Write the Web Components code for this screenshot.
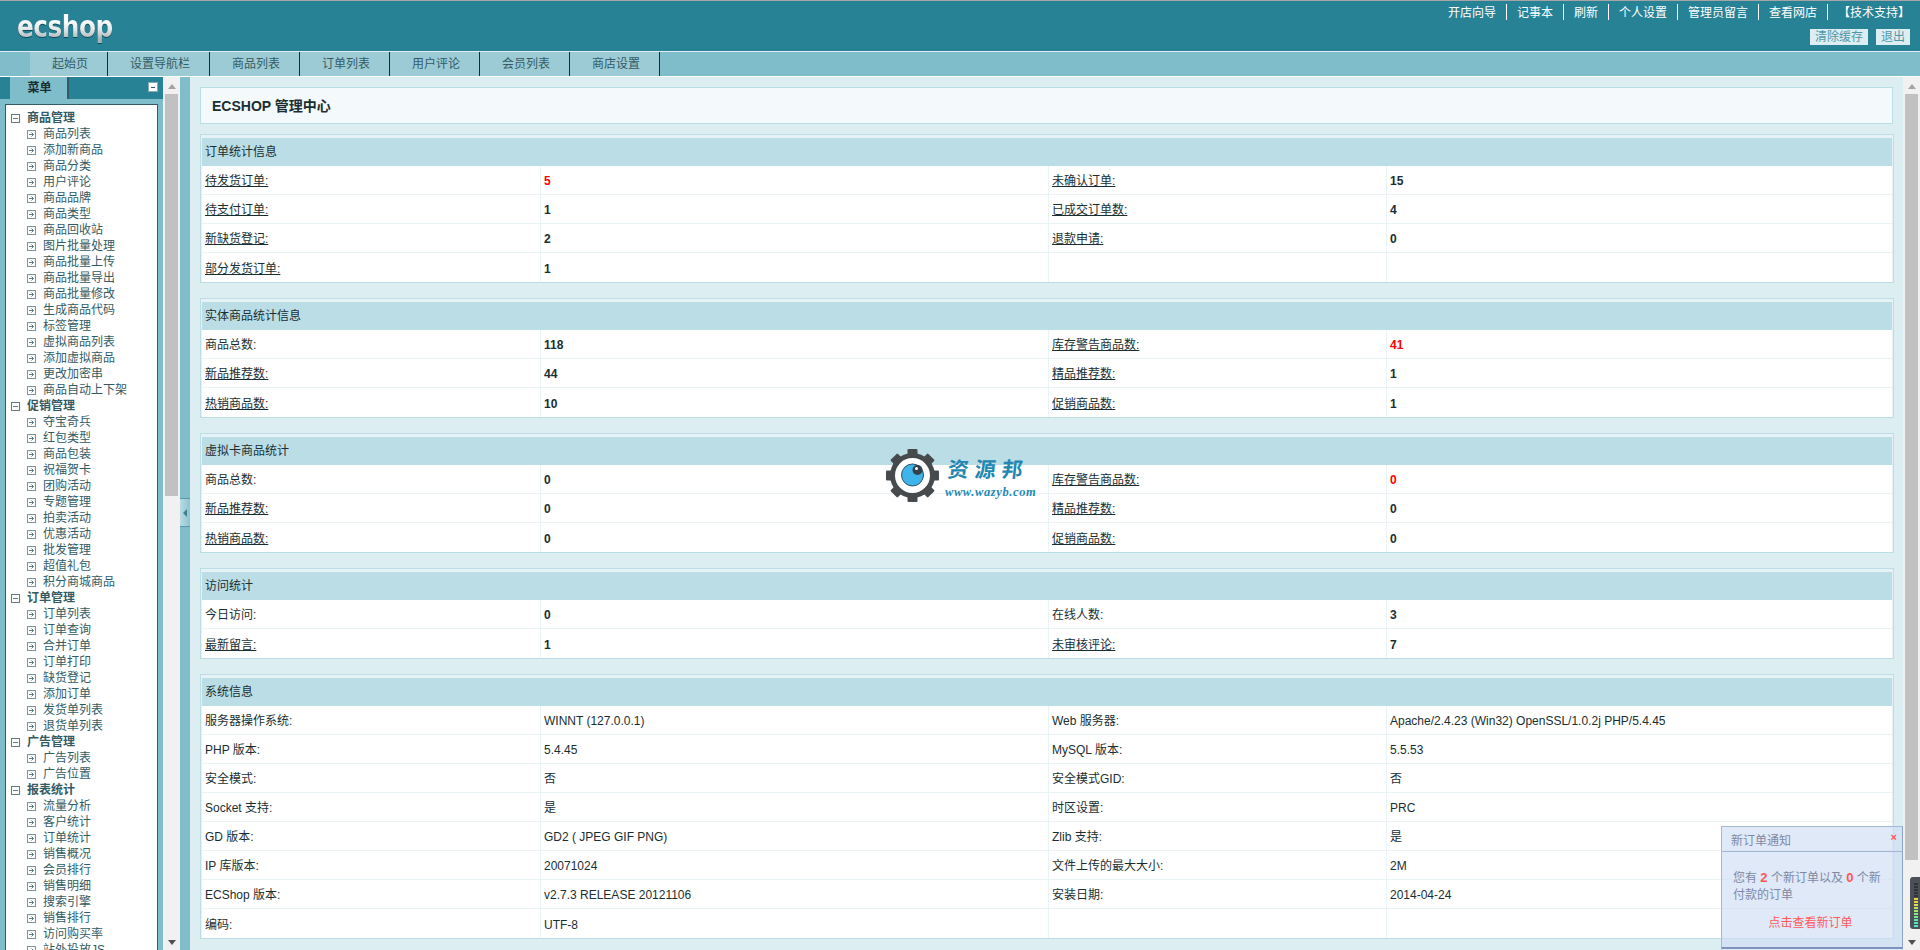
<!DOCTYPE html>
<html lang="zh">
<head>
<meta charset="utf-8">
<title>ECSHOP 管理中心</title>
<style>
html,body{margin:0;padding:0;height:950px;overflow:hidden;background:#DDEEF2;}
body{font:12px/1.2 "Liberation Sans","Noto Sans CJK SC",sans-serif;color:#192E32;}
</style>
</head>
<body>
<es-app></es-app>
<script>
const def=(name,html,extra)=>{
  customElements.define(name,class extends HTMLElement{
    constructor(){super();this.attachShadow({mode:'open'});this.shadowRoot.innerHTML=typeof html==='function'?html(this):html;}
    connectedCallback(){ if(extra) extra(this); }
  });
};

def('es-header',`<style>
:host{display:flex;justify-content:space-between;height:50px;background:#278296;border-top:1px solid #a5a5a5;}
.logo{margin:4px 0 0 17px;height:42px;font:bold 31px/42px "DejaVu Sans",sans-serif;letter-spacing:-.6px;transform:scaleX(.8);transform-origin:0 50%;white-space:nowrap;
 background:linear-gradient(#fff 35%,#e4e7e8 58%,#a9b2b5 82%);-webkit-background-clip:text;background-clip:text;color:transparent;filter:drop-shadow(0 1px 0 rgba(0,40,50,.6));}
.logo sup{font-size:8px;line-height:8px;font-weight:normal;vertical-align:top;position:relative;top:8px;left:2px;letter-spacing:0}
.r{display:flex;flex-direction:column;align-items:flex-end;}
.links{display:flex;margin-top:3px;color:#fff;}
.links span{display:block;height:16px;padding:0 10px;border-right:1px solid #fff;line-height:18px;}
.links span:last-child{border:0;}
.btns{display:flex;gap:8px;margin:9px 10px 0 0;}
.btns span{display:block;height:16px;line-height:16px;padding:0 5px;background:#DDEEF2;color:#4f97a8;}
</style>
<div class="logo">ecshop<sup>®</sup></div>
<div class="r">
 <div class="links"><span>开店向导</span><span>记事本</span><span>刷新</span><span>个人设置</span><span>管理员留言</span><span>查看网店</span><span>【技术支持】</span></div>
 <div class="btns"><span>清除缓存</span><span>退出</span></div>
</div>`);

def('es-nav',`<style>
:host{display:flex;height:24px;margin-top:1px;padding-left:30px;background:#80BDCB;border-bottom:1px solid #fff;color:#335B64;}
span{display:block;line-height:24px;padding:0 19px 0 22px;background:#9CCBD6;border-right:1px solid #192E32;}
span:first-child{border-left:1px solid #192E32;padding-left:21px;}
</style>
<span>起始页</span><span>设置导航栏</span><span>商品列表</span><span>订单列表</span><span>用户评论</span><span>会员列表</span><span>商店设置</span>`);

def('es-scroll',t=>`<style>
:host{display:flex;flex-direction:column;align-items:center;width:17px;height:873px;background:#f1f1f1;flex:none;}
.up,.dn{width:0;height:0;border-left:4.5px solid transparent;border-right:4.5px solid transparent;}
.up{border-bottom:5px solid #a3a3a3;margin-top:7px;}
.dn{border-top:5px solid #505050;}
.th{width:13px;background:#c1c1c1;margin-top:5px;height:${t.getAttribute('thumb')}px;}
.sp{flex:1;}
</style><div class="up"></div><div class="th"></div><div class="sp"></div><div class="dn" style="margin-bottom:5px"></div>`);

const minus=`<svg width="9" height="9" viewBox="0 0 9 9"><rect x=".5" y=".5" width="8" height="8" fill="#fff" stroke="#5f7f87"/><path d="M2 4.5h5" stroke="#5f7f87"/></svg>`;
const arrow=`<svg width="9" height="9" viewBox="0 0 9 9"><rect x=".5" y=".5" width="8" height="8" fill="#fff" stroke="#7a959b"/><path d="M2 4.5h4.5M4.5 2.5l2 2-2 2" fill="none" stroke="#5f7f87"/></svg>`;

const menu=[
['商品管理',['商品列表','添加新商品','商品分类','用户评论','商品品牌','商品类型','商品回收站','图片批量处理','商品批量上传','商品批量导出','商品批量修改','生成商品代码','标签管理','虚拟商品列表','添加虚拟商品','更改加密串','商品自动上下架']],
['促销管理',['夺宝奇兵','红包类型','商品包装','祝福贺卡','团购活动','专题管理','拍卖活动','优惠活动','批发管理','超值礼包','积分商城商品']],
['订单管理',['订单列表','订单查询','合并订单','订单打印','缺货登记','添加订单','发货单列表','退货单列表']],
['广告管理',['广告列表','广告位置']],
['报表统计',['流量分析','客户统计','订单统计','销售概况','会员排行','销售明细','搜索引擎','销售排行','访问购买率','站外投放JS']]
];

def('es-sidebar',`<style>
:host{display:block;width:163px;height:873px;overflow:hidden;background:#80BDCB;flex:none;color:#335B64;}
.bar{display:flex;align-items:flex-start;height:22px;padding-left:10px;background:#278296;}
.tab{width:57px;height:22px;line-height:22px;text-indent:2px;text-align:center;font-weight:bold;background:#80BDCB;color:#192E32;border-right:2px solid #335B64;box-sizing:content-box;}
.tg{margin:5px 5px 0 auto;width:8px;height:8px;background:#fff;border:1px solid #8aa;display:flex;align-items:center;justify-content:center;}
.tg i{display:block;width:4px;height:1px;background:#335B64;}
.box{margin:5px 5px 0 5px;padding:5px 0 0 5px;width:146px;min-height:900px;background:#fff;border:1px solid #335B64;}
.row{display:flex;align-items:center;height:16px;white-space:nowrap;}
.row svg{flex:none;}
.t{font-weight:bold;}
.t svg{margin-right:7px;}
.i{padding-left:16px;}
.i svg{margin-right:7px;}
</style>
<div class="bar"><div class="tab">菜单</div><div class="tg"><i></i></div></div>
<div class="box">${menu.map(([h,l])=>`<div class="row t">${minus}<span>${h}</span></div>`+l.map(x=>`<div class="row i">${arrow}<span>${x}</span></div>`).join('')).join('')}</div>`);

def('es-strip',`<style>
:host{display:block;width:10px;height:873px;background:#80BDCB;flex:none;padding-top:421px;box-sizing:border-box;}
.h{display:flex;align-items:center;justify-content:center;height:29px;background:linear-gradient(90deg,#b9dbe4,#8fc3d0);border-top:1px solid #5a97a8;border-bottom:1px solid #5a97a8;box-sizing:border-box;}
.h i{display:block;width:0;height:0;border-top:4px solid transparent;border-bottom:4px solid transparent;border-right:4px solid #3f7f90;}
</style><div class="h"><i></i></div>`);

def('es-cell',`<style>
:host{display:flex;align-items:center;box-sizing:border-box;padding:3px 0 0 3px;height:100%;border-right:1px solid #eaf4f6;color:#192E32;}
:host(:last-child){border-right:0;}
:host([link]) span{text-decoration:underline;}
:host([b]) span{font-weight:bold;}
:host([red]) span{color:#f00;}
</style><span><slot></slot></span>`);

def('es-row',`<style>
:host{display:grid;grid-template-columns:339px 508px 338px 1fr;height:29px;box-sizing:border-box;background:#fff;border-bottom:1px solid #eaf4f6;}
:host(:last-child){border-bottom:0;}
</style><slot></slot>`);

def('es-panel',t=>`<style>
:host{display:block;margin-bottom:15px;padding:3px 1px 0;background:#e6f2f5;border:1px solid #BBDDE5;}
.th{display:flex;align-items:center;height:28px;padding-left:3px;background:#BBDDE5;color:#192E32;}
</style><div class="th">${t.getAttribute('heading')}</div><slot></slot>`);

def('es-title',`<style>
:host{display:flex;align-items:center;box-sizing:border-box;height:37px;margin:0 1.5px 10px 0;padding:2px 0 0 11px;background:#F4FAFB;border:1px solid #BBDDE5;font-weight:bold;font-size:14px;color:#192E32;}
</style><slot></slot>`);

def('es-popup',`<style>
:host{position:absolute;right:17px;bottom:1px;display:block;box-sizing:border-box;width:182px;height:123px;background:rgba(207,221,245,.65);border:1px solid #a6b8d8;border-right-color:#8fa2c8;border-bottom:2px solid #7f92bd;color:#7d88a6;}
.h{display:flex;justify-content:space-between;align-items:center;box-sizing:border-box;height:25px;padding:4px 5px 0 9px;border-bottom:1px solid #a3b4d6;}
.x{color:#f55;font-weight:bold;font-size:11px;margin-top:-6px;}
.b{padding:17px 18px 0 11px;line-height:17px;}
b{color:#f55;font-size:13px;}
.l{margin-top:11px;padding-left:4px;text-align:center;color:#ff5a5a;}
</style>
<div class="h"><span>新订单通知</span><span class="x">×</span></div>
<div class="b">您有 <b>2</b> 个新订单以及 <b>0</b> 个新付款的订单<div class="l">点击查看新订单</div></div>`);

def('es-meter',`<style>
:host{position:absolute;left:1910px;top:877px;display:flex;flex-direction:column;gap:1px;box-sizing:border-box;width:10px;height:52px;padding:6px 2px 0 4px;background:#4b5058;border-radius:3px 0 0 3px;}
i{display:block;height:2px;background:#2f3238;flex:none;}
</style>
${Array.from({length:15},(_, n)=>{const c=['#2f3238','#2f3238','#2f3238','#2f3238','#2f3238','#e8d33a','#e8d33a','#dfe04a','#c4e45c','#a6e66c','#8fe67e','#7ce68f','#66e6a4','#55e6b8','#4fe6c8'][n];return `<i style="background:${c}"></i>`}).join('')}`);

def('es-watermark',`<style>
:host{position:absolute;left:886px;top:449px;display:flex;align-items:flex-start;gap:9px;}
.t{display:flex;flex-direction:column;color:#2387b2;}
.a{font:bold 21px/26px "Noto Sans CJK SC",sans-serif;letter-spacing:6px;margin-top:6px;transform:skewX(-6deg);white-space:nowrap;}
.b{font:italic bold 12.5px/16px "Liberation Serif",serif;letter-spacing:.6px;margin-top:3px;margin-left:-3px;white-space:nowrap;}
</style>
<svg width="53" height="53" viewBox="-26.5 -26.5 53 53">
 <g fill="#474a4c">
  <rect x="-5" y="-26.5" width="10" height="53" rx="1"/>
  <rect x="-5" y="-26.5" width="10" height="53" rx="1" transform="rotate(45)"/>
  <rect x="-5" y="-26.5" width="10" height="53" rx="1" transform="rotate(90)"/>
  <rect x="-5" y="-26.5" width="10" height="53" rx="1" transform="rotate(135)"/>
  <circle r="22.5"/>
 </g>
 <circle r="17.5" fill="#fff"/>
 <circle r="11" cy="-.5" fill="#3fb4ea" stroke="#34515f" stroke-width="1"/>
 <circle r="5" cx="5" cy="-5.5" fill="#34404a"/>
 <circle r="1.5" cx="4" cy="-7" fill="#fff"/>
</svg>
<div class="t"><div class="a">资源邦</div><div class="b">www.wazyb.com</div></div>`);

const L=(x,o='link')=>`<es-cell ${o}>${x}</es-cell>`, V=(x,o='b')=>`<es-cell ${o}>${x}</es-cell>`;
const row=(a,b,c,d)=>`<es-row>${a}${b}${c}${d}</es-row>`;
const stat=(t1,v1,t2,v2,red)=>row(L(t1),V(v1),L(t2),V(v2,red?'b red':'b'));
const goods=(a,b,c,d,e,f)=>row(L('商品总数:',''),V(a),L('库存警告商品数:'),V(b,'b red'))+stat('新品推荐数:',c,'精品推荐数:',d)+stat('热销商品数:',e,'促销商品数:',f);
const sys=[['服务器操作系统:','WINNT (127.0.0.1)','Web 服务器:','Apache/2.4.23 (Win32) OpenSSL/1.0.2j PHP/5.4.45'],['PHP 版本:','5.4.45','MySQL 版本:','5.5.53'],['安全模式:','否','安全模式GID:','否'],['Socket 支持:','是','时区设置:','PRC'],['GD 版本:','GD2 ( JPEG GIF PNG)','Zlib 支持:','是'],['IP 库版本:','20071024','文件上传的最大大小:','2M'],['ECShop 版本:','v2.7.3 RELEASE 20121106','安装日期:','2014-04-24'],['编码:','UTF-8','','']];

def('es-main',`<style>
:host{display:block;flex:1;min-width:0;height:873px;overflow:hidden;box-sizing:border-box;padding:10px 9px 0 10px;background:#DDEEF2;}
</style><slot></slot>`);

def('es-app',`<style>
:host{display:block;position:relative;width:1920px;height:950px;overflow:hidden;}
.body{display:flex;height:873px;}
</style>
<es-header></es-header>
<es-nav></es-nav>
<div class="body">
 <es-sidebar></es-sidebar>
 <es-scroll thumb="402"></es-scroll>
 <es-strip></es-strip>
 <es-main>
  <es-title>ECSHOP 管理中心</es-title>
  <es-panel heading="订单统计信息">${row(L('待发货订单:'),V('5','b red'),L('未确认订单:'),V('15'))+stat('待支付订单:',1,'已成交订单数:',4)+stat('新缺货登记:',2,'退款申请:',0)+row(L('部分发货订单:'),V('1'),L('',''),L('',''))}</es-panel>
  <es-panel heading="实体商品统计信息">${goods(118,41,44,1,10,1)}</es-panel>
  <es-panel heading="虚拟卡商品统计">${goods(0,0,0,0,0,0)}</es-panel>
  <es-panel heading="访问统计">${row(L('今日访问:',''),V('0'),L('在线人数:',''),V('3'))+stat('最新留言:',1,'未审核评论:',7)}</es-panel>
  <es-panel heading="系统信息">${sys.map(r=>row(L(r[0],''),V(r[1],''),L(r[2],''),V(r[3],''))).join('')}</es-panel>
 </es-main>
 <es-scroll thumb="766"></es-scroll>
</div>
<es-watermark></es-watermark>
<es-popup></es-popup>
<es-meter></es-meter>`);
</script>
</body>
</html>
